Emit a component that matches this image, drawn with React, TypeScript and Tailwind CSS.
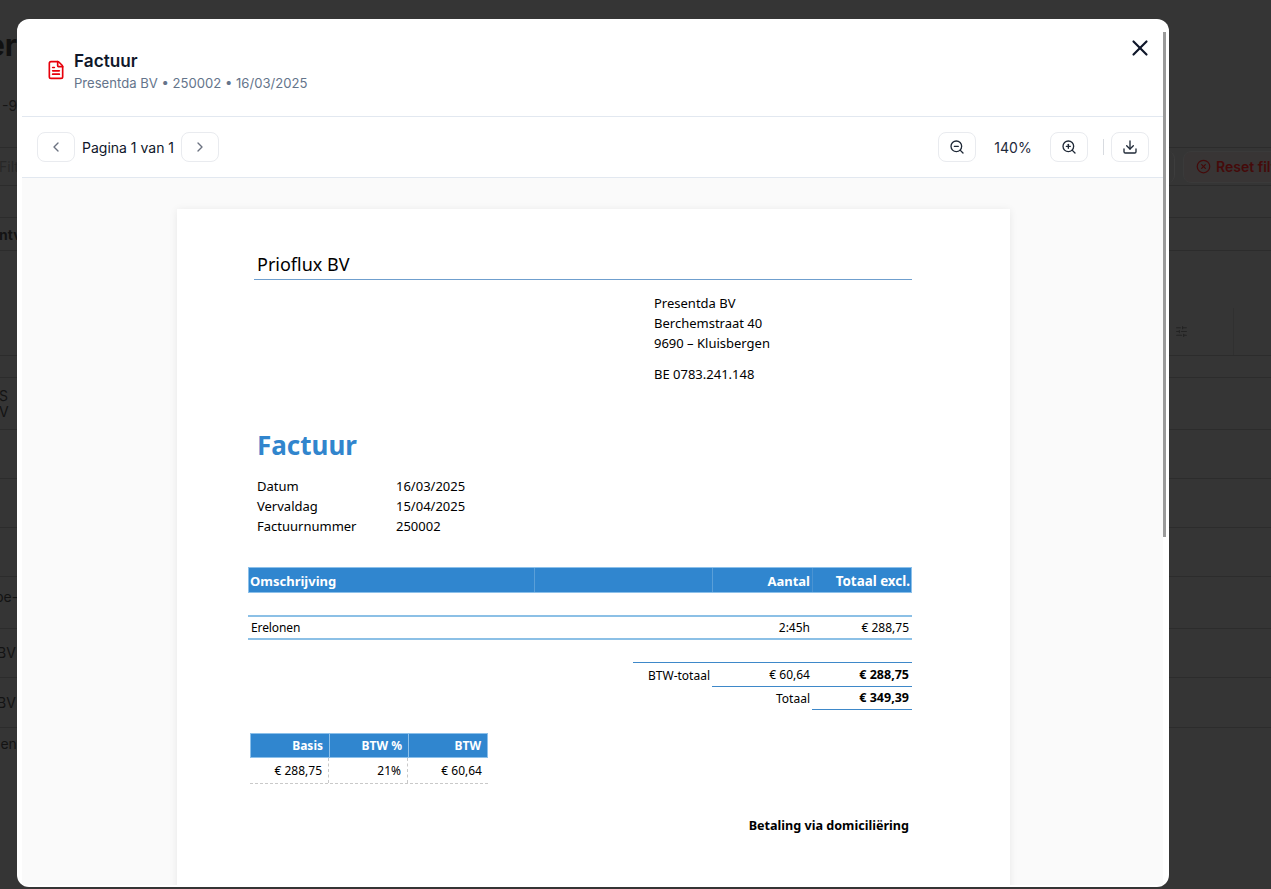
import React from 'react';
import { ChevronLeft, ChevronRight, CircleX, Download, FileText, SlidersHorizontal, X, ZoomIn, ZoomOut } from 'lucide-react';

function BgRow({ height, children, right, pad = 'items-center', line = 'border-b border-[#2c2c2c]' }: { height: string; children?: React.ReactNode; right?: React.ReactNode; pad?: string; line?: string }) {
  return (
    <div className={`flex shrink-0 ${line} ${height}`}>
      <div className={`flex w-[17px] shrink-0 overflow-hidden whitespace-nowrap text-sm text-[#131313] ${pad}`}>{children}</div>
      {right}
    </div>
  );
}

function ToolButton({ children }: { children: React.ReactNode }) {
  return (
    <button className="flex h-[30px] w-[38px] items-center justify-center rounded-lg border border-[#e9ebef] bg-white text-[#1f2937]">
      {children}
    </button>
  );
}

function BackgroundPage() {
  return (
    <div className="flex flex-col font-['Inter',sans-serif]">
      <div className="flex h-[148px] shrink-0 flex-col border-b border-[#2c2c2c]">
        <div className="mt-[27px] flex h-[36px] w-[17px] justify-end overflow-hidden text-[30px] leading-[36px] font-bold whitespace-nowrap text-[#111]">er</div>
        <div className="mt-[33px] flex w-[17px] overflow-hidden text-sm whitespace-nowrap text-[#161616]">
          <span className="ml-[2px]">-90</span>
        </div>
      </div>
      <BgRow
        height="h-[38px]"
        right={
          <div className="ml-[1150px] flex h-[32px] shrink-0 items-center self-center">
            <div className="mr-[8px] ml-[-20px] h-[32px] w-[28px] shrink-0 rounded-r-lg border-r border-[#3d3d3d]" />
            <div className="flex h-[32px] w-[110px] shrink-0 items-center gap-[5px] rounded-lg border border-[#3a3a3a] bg-[#383535] pl-[12px] text-sm font-semibold whitespace-nowrap text-[#450a0a]">
              <CircleX size={15} className="shrink-0" />
              <span>Reset filters</span>
            </div>
          </div>
        }
      >
        <span className="ml-[-1px] text-[#272727]">Filter</span>
      </BgRow>
      <div className="h-[32px] shrink-0 border-b border-[#2c2c2c]" />
      <BgRow height="h-[33px]" pad="items-center pt-[2px]">
        <span className="ml-[-1px] font-bold">ntv</span>
      </BgRow>
      <BgRow
        height="h-[105px]"
        pad="items-end"
        right={
          <div className="ml-[1158px] flex h-full shrink-0 items-end">
            <div className="flex h-[47px] items-center">
              <SlidersHorizontal size={13} className="shrink-0 text-[#232323]" />
              <div className="ml-[45px] h-full w-px bg-[#303030]" />
            </div>
          </div>
        }
      />
      <BgRow height="h-[22px]" />
      <BgRow height="h-[52px]">
        <span className="ml-[-1px] leading-4">
          S<br />V
        </span>
      </BgRow>
      <BgRow height="h-[49px]" />
      <BgRow height="h-[49px]" />
      <BgRow height="h-[49px]" />
      <BgRow height="h-[52px]" pad="items-start pt-[10px]">
        <span className="ml-[-5px]">pe-</span>
      </BgRow>
      <BgRow height="h-[49px]">
        <span className="ml-[-3px]">BV</span>
      </BgRow>
      <BgRow height="h-[50px]">
        <span className="ml-[-3px]">BV</span>
      </BgRow>
      <BgRow height="h-[60px]" pad="items-start pt-[6px]" line="">
        <span className="ml-[-3px]">len</span>
      </BgRow>
    </div>
  );
}

function InvoicePage() {
  return (
    <div className="ml-[155px] h-[720px] w-[833px] bg-white pt-[42px] pl-[71px] font-['Noto_Sans',sans-serif] text-[13px] text-black shadow-[0_1px_8px_rgba(0,0,0,0.08)]">
      <div className="ml-[6px] w-[658px] border-b border-[#6f9fce] pb-[2px] pl-[3px] text-[18px] leading-[26px]">Prioflux BV</div>

      <div className="mt-[13px] ml-[406px] leading-[20px]">
        <p>Presentda BV</p>
        <p>Berchemstraat 40</p>
        <p>9690 – Kluisbergen</p>
        <p className="mt-[11px]">BE 0783.241.148</p>
      </div>

      <h1 className="mt-[41px] ml-[9px] text-[26px] leading-[40px] font-bold text-[#3185cd]">Factuur</h1>

      <div className="mt-[11px] ml-[9px] leading-[20px]">
        <div className="flex"><span className="w-[139px]">Datum</span><span>16/03/2025</span></div>
        <div className="flex"><span className="w-[139px]">Vervaldag</span><span>15/04/2025</span></div>
        <div className="flex"><span className="w-[139px]">Factuurnummer</span><span>250002</span></div>
      </div>

      {/* Lines table */}
      <div className="mt-[31px] flex h-[26px] w-[664px] items-center border border-[#8cc0ea] bg-[#3086cf] text-[13px] font-bold text-white">
        <span className="h-[24px] w-[286px] border-r border-[#5a9fd8] pt-[2px] pl-[1px] leading-[22px]">Omschrijving</span>
        <span className="h-[24px] w-[178px] border-r border-[#5a9fd8] leading-[24px]">&nbsp;</span>
        <span className="h-[24px] w-[100px] border-r border-[#4a93d2] pt-[2px] pr-[2px] text-right leading-[22px]">Aantal</span>
        <span className="h-[24px] flex-1 pt-[2px] pr-px text-right text-[13.4px] leading-[22px] whitespace-nowrap">Totaal excl.</span>
      </div>
      <div className="mt-[22px] flex h-[25px] w-[664px] items-center border-y-2 border-[#8cc0e6] text-[12px]">
        <span className="w-[464px] pl-[3px] tracking-[-0.1px]">Erelonen</span>
        <span className="w-[100px] pr-[2px] text-right">2:45h</span>
        <span className="flex-1 pr-[3px] text-right">€ 288,75</span>
      </div>

      {/* Totals */}
      <div className="mt-[22px] ml-[385px] w-[279px] border-t border-[#3e88c9] text-[12px]">
        <div className="flex h-[24px] items-center pt-[1px]">
          <span className="w-[79px] pr-[2px] text-right">BTW-totaal</span>
          <div className="flex h-full flex-1 items-center border-b border-[#3e88c9]">
            <span className="w-[100px] pr-[2px] text-right">€ 60,64</span>
            <span className="flex-1 pr-[3px] text-right text-[12.5px] font-bold">€ 288,75</span>
          </div>
        </div>
        <div className="ml-[79px] flex h-[23px] items-center">
          <span className="w-[100px] pr-[2px] text-right">Totaal</span>
          <span className="flex h-full flex-1 items-center justify-end border-b border-[#3e88c9] pr-[3px] text-[12.5px] font-bold">€ 349,39</span>
        </div>
      </div>

      {/* VAT table */}
      <div className="mt-[23px] ml-[2px] w-[238px] text-[12px]">
        <div className="flex h-[25px] items-center border border-[#8cc0ea] bg-[#3086cf] font-bold text-white">
          <span className="w-[79px] border-r border-[#8cc0ea] pr-[6px] text-right leading-[23px]">Basis</span>
          <span className="w-[79px] border-r border-[#8cc0ea] pr-[6px] text-right leading-[23px]">BTW %</span>
          <span className="flex-1 pr-[6px] text-right leading-[23px]">BTW</span>
        </div>
        <div className="flex h-[26px] items-center border-b border-dashed border-[#c9c9c9]">
          <span className="h-full w-[79px] border-r border-dashed border-[#c9c9c9] pr-[6px] text-right leading-[25px]">€ 288,75</span>
          <span className="h-full w-[79px] border-r border-dashed border-[#c9c9c9] pr-[6px] text-right leading-[25px]">21%</span>
          <span className="flex-1 pr-[6px] text-right leading-[25px]">€ 60,64</span>
        </div>
      </div>

      <p className="mt-[32px] w-[661px] text-right text-[12.6px] leading-[20px] font-bold">Betaling via domiciliëring</p>
    </div>
  );
}

export default function App() {
  return (
    <div className="relative h-[889px] w-[1271px] overflow-hidden bg-[#353535]">
      <BackgroundPage />

      {/* Modal */}
      <div className="absolute top-[19px] left-[17px] flex h-[868px] w-[1152px] flex-col overflow-hidden rounded-xl bg-white pr-[6px] pb-[2px] pl-[5px] font-['Inter',sans-serif]">
        <div className="flex h-[98px] shrink-0 items-start border-b border-[#e2e8f0]">
          <FileText size={20} className="mt-[41px] ml-[24px] text-[#e7000b]" strokeWidth={2} />
          <div className="mt-[30px] ml-[8px]">
            <h2 className="text-[17.2px] leading-[24px] font-semibold text-[#0f172a]">Factuur</h2>
            <p className="text-[13.1px] leading-[20px] text-[#64748b]">Presentda BV • 250002 • 16/03/2025</p>
          </div>
          <button className="mt-[16px] mr-[10px] ml-auto text-[#0f172a]">
            <X size={26} />
          </button>
        </div>

        <div className="flex h-[61px] shrink-0 items-center border-b border-[#e2e8f0] pr-[14px] pl-[15px]">
          <ToolButton><ChevronLeft size={16} className="text-[#6b7280]" /></ToolButton>
          <span className="mx-[7px] mt-[1px] text-sm text-[#0f172a]">Pagina 1 van 1</span>
          <ToolButton><ChevronRight size={16} className="text-[#6b7280]" /></ToolButton>
          <div className="ml-auto flex items-center">
            <ToolButton><ZoomOut size={16} /></ToolButton>
            <span className="mt-[1px] w-[74px] text-center text-sm text-[#1e293b]">140%</span>
            <ToolButton><ZoomIn size={16} /></ToolButton>
            <div className="mr-[7px] ml-[15px] h-[16px] w-px bg-[#d8dbe0]" />
            <ToolButton><Download size={16} /></ToolButton>
          </div>
        </div>

        <div className="flex-1 overflow-hidden bg-[#fafafa] pt-[31px]">
          <InvoicePage />
        </div>

        {/* Scrollbar thumb */}
        <div className="absolute top-[13px] right-[3px] h-[505px] w-[3px] bg-[#9a9a9a]" />
      </div>
    </div>
  );
}
